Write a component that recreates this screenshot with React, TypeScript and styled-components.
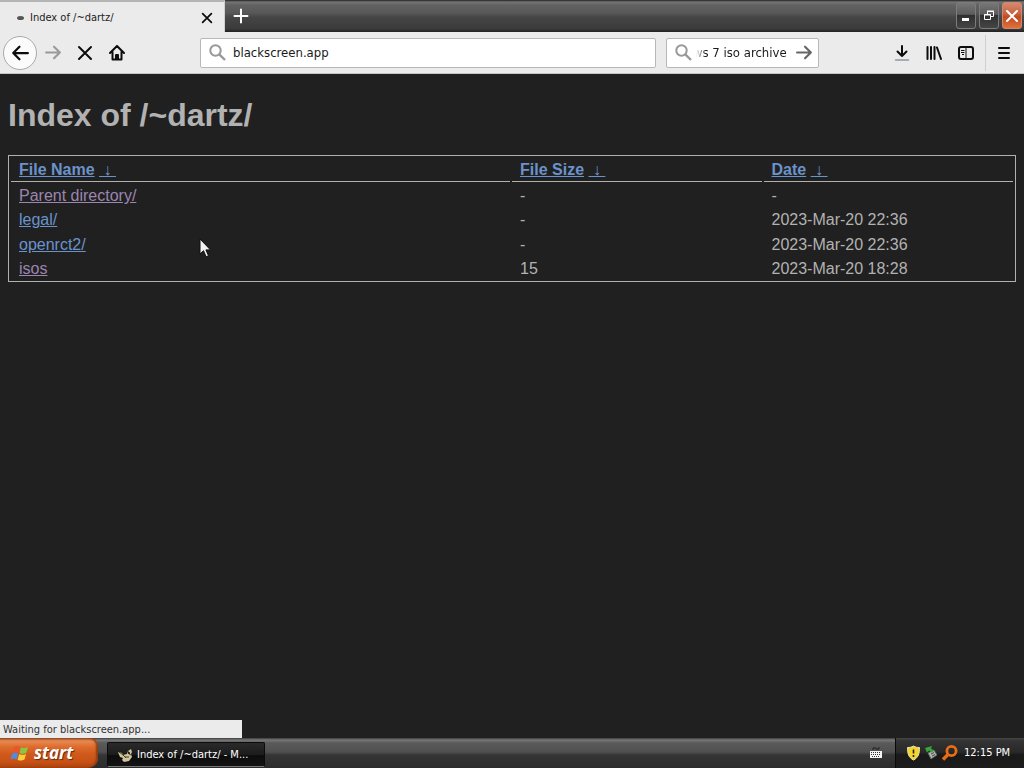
import React from "react";
import styled, { createGlobalStyle } from "styled-components";

const ui = `"DejaVu Sans Condensed", Tahoma, "DejaVu Sans", sans-serif`;

const Global = createGlobalStyle`
  * { box-sizing: border-box; }
  body { margin: 0; background: #202020; }
  button { border: 0; padding: 0; margin: 0; background: none; cursor: default; }
`;

const Desktop = styled.div`
  display: flex;
  flex-direction: column;
  min-height: 100vh;
  font-family: ${ui};
`;

const TitleBar = styled.header`
  display: flex;
  height: 32px;
  background: linear-gradient(#222 0, #757575 2px, #626262 5px, #585858 13px, #464646 17px, #3a3a3a 29px, #262626 31px);
`;

const Tab = styled.div`
  display: flex;
  align-items: center;
  width: 225px;
  padding: 1px 9px 0 17px;
  border-top: 2px solid #b4b4b4;
  border-right: 1px solid #d0d0d0;
  background: #ebebeb;
`;

const Throbber = styled.span`
  width: 7px;
  height: 4px;
  margin-right: 6px;
  border-radius: 50%;
  background: #555;
`;

const TabTitle = styled.span`
  flex: 1;
  font-size: 11px;
  line-height: 16px;
  color: #222;
`;

const IconButton = styled.button<{ $w: number; $h?: number }>`
  display: flex;
  flex: none;
  align-items: center;
  justify-content: center;
  width: ${(p) => p.$w}px;
  height: ${(p) => p.$h ?? 32}px;
`;

const WindowButtons = styled.div`
  display: flex;
  gap: 3px;
  margin-left: auto;
  padding: 2px 2px 0 0;
`;

const WindowButton = styled.button<{ $close?: boolean }>`
  display: flex;
  align-items: center;
  justify-content: center;
  width: 20px;
  height: 27px;
  border: 1px solid ${(p) => (p.$close ? "#c98a70" : "#7c7c7c")};
  border-radius: 3px;
  background: ${(p) =>
    p.$close
      ? "linear-gradient(#d58a70, #c8613d 45%, #c04a20 55%, #e0713c)"
      : "linear-gradient(#777, #5c5c5c 45%, #303030 50%, #454545)"};
`;

const ToolBar = styled.nav`
  display: flex;
  align-items: center;
  height: 42px;
  padding: 0 2px 0 3px;
  border-bottom: 1px solid #c4c4c4;
  background: #ebebeb;
`;

const BackButton = styled(IconButton)`
  border: 1px solid #a9a9a9;
  border-radius: 50%;
  background: #fbfbfb;
`;

const Field = styled.label<{ $search?: boolean }>`
  display: flex;
  align-items: center;
  height: 30px;
  min-width: 0;
  flex: ${(p) => (p.$search ? "0 0 153px" : "1 1 0")};
  margin-left: ${(p) => (p.$search ? 10 : 67)}px;
  padding: 0 5px 0 8px;
  border: 1px solid #b8b8b8;
  border-radius: 2px;
  background: #fff;
`;

const FieldInput = styled.input<{ $clipped?: boolean }>`
  flex: 1;
  min-width: 0;
  height: 20px;
  margin-left: ${(p) => (p.$clipped ? 4 : 7)}px;
  padding: 0;
  border: 0;
  outline: 0;
  background: none;
  font: 13px/20px ${ui};
  color: #1a1a1a;
  text-indent: ${(p) => (p.$clipped ? -3 : 0)}px;
  mask-image: ${(p) => (p.$clipped ? "linear-gradient(90deg, transparent, #000 10px)" : "none")};
`;

const Tools = styled.div`
  display: flex;
  align-items: center;
  margin-left: 67px;
`;

const MenuSlot = styled.div`
  display: flex;
  align-items: center;
  height: 36px;
  margin-left: 3px;
  border-left: 1px solid #cfcfcf;
`;

const Page = styled.main`
  position: relative;
  flex: 1;
  padding: 0 8px;
  font: 16px/18px "Liberation Sans", Arial, sans-serif;
  color: #b2b2b2;
  background: #202020;
`;

const Heading = styled.h1`
  margin: 0;
  padding: 23px 0 21px;
  font-size: 32px;
  line-height: 37px;
`;

const FileTable = styled.table`
  width: 100%;
  height: 127px;
  table-layout: fixed;
  border: 1px solid #b0b0ac;
  border-spacing: 2px;
`;

const HeadCell = styled.th<{ $width: string }>`
  width: ${(p) => p.$width};
  height: 24px;
  padding: 0 8px;
  border-bottom: 1px solid #b0b0ac;
  text-align: left;
`;

const Cell = styled.td`
  height: 22px;
  padding: 2px 8px 0;
`;

const Link = styled.a<{ $visited?: boolean }>`
  color: ${(p) => (p.$visited ? "#9b86b0" : "#6b93cb")};
`;

const Status = styled.div`
  position: absolute;
  left: 0;
  bottom: 0;
  width: 242px;
  height: 18px;
  padding: 1px 3px 0;
  background: #ebebeb;
  font: 11px/18px ${ui};
  color: #333;
`;

const Cursor = styled.svg`
  position: absolute;
  left: 199px;
  top: 164px;
`;

const TaskBar = styled.footer`
  display: flex;
  align-items: stretch;
  height: 30px;
  background: linear-gradient(#3c3c3c, #777 2px, #5a5a5a 5px, #505050 14px, #353535 17px, #2c2c2c);
`;

const StartButton = styled.button`
  display: flex;
  align-items: center;
  gap: 4px;
  width: 98px;
  padding-left: 10px;
  border-radius: 0 8px 10px 0;
  background: linear-gradient(#8f4a28, #e88a52 3px, #dd6b2c 9px, #d05a1c 16px, #c85216 24px, #a8420e);
  box-shadow: inset -2px 0 2px #8c3c10;
  color: #fff;
  font: italic bold 17px/24px "Open Sans", "Noto Sans", sans-serif;
  text-shadow: 1px 1px 1px #5c2a0c;
`;

const TaskButton = styled.button`
  display: flex;
  align-items: center;
  gap: 4px;
  width: 158px;
  height: 25px;
  margin: 4px 0 0 9px;
  padding-left: 10px;
  border: 1px solid #0c0c0c;
  border-bottom-color: #777;
  border-radius: 2px;
  background: linear-gradient(#2a2a2a, #1c1c1c 50%, #0c0c0c 55%, #141414);
  color: #fff;
  font: 11px/16px ${ui};
`;

const Keyboard = styled.div`
  display: flex;
  align-items: center;
  margin-left: auto;
  padding: 0 12px;
`;

const Tray = styled.div`
  display: flex;
  align-items: center;
  gap: 2px;
  width: 129px;
  padding-left: 10px;
  border-left: 1px solid #090909;
  background: linear-gradient(#444, #333 3px, #292929 14px, #191919 17px, #1c1c1c);
`;

const Clock = styled.time`
  margin-left: 4px;
  font-size: 11px;
  line-height: 16px;
  color: #fff;
  white-space: nowrap;
`;

const Line = ({ d, size = 16, color = "#0c0c0d", width = 2 }: { d: string; size?: number; color?: string; width?: number }) => (
  <svg width={size} height={size} viewBox="0 0 16 16" fill="none" stroke={color} strokeWidth={width} strokeLinecap="round" strokeLinejoin="round">
    <path d={d} />
  </svg>
);

const Magnifier = () => (
  <svg width="17" height="17" viewBox="0 0 17 17" fill="none" stroke="#999" strokeWidth="2">
    <circle cx="6.5" cy="6.5" r="5.2" />
    <path d="M10.3 10.3 16 16" strokeWidth="2.4" />
  </svg>
);

const columns = [
  { label: "File Name", width: "50%" },
  { label: "File Size", width: "25%" },
  { label: "Date", width: "25%" },
];

const files = [
  { name: "Parent directory/", size: "-", date: "-", visited: true },
  { name: "legal/", size: "-", date: "2023-Mar-20 22:36" },
  { name: "openrct2/", size: "-", date: "2023-Mar-20 22:36" },
  { name: "isos", size: "15", date: "2023-Mar-20 18:28", visited: true },
];

export default function App() {
  return (
    <Desktop>
      <Global />
      <TitleBar>
        <Tab>
          <Throbber />
          <TabTitle>Index of /~dartz/</TabTitle>
          <IconButton $w={16} $h={20} aria-label="Close tab">
            <Line size={14} width={2} d="M3 3l10 10M13 3L3 13" />
          </IconButton>
        </Tab>
        <IconButton $w={32} aria-label="New tab">
          <Line color="#fff" d="M8 1.5v13M1.5 8h13" />
        </IconButton>
        <WindowButtons>
          <WindowButton aria-label="Minimize">
            <svg width="16" height="16"><path d="M4 10h7v3H4z" fill="#fff" /></svg>
          </WindowButton>
          <WindowButton aria-label="Restore">
            <svg width="16" height="16" fill="none" stroke="#fff">
              <path d="M6.5 6V3.5h6v5H10M6 3h7" />
              <path d="M3.500 6.500h6v5h-6zM3 7h7" />
            </svg>
          </WindowButton>
          <WindowButton $close aria-label="Close">
            <Line color="#fff" d="M3 3l10 10M13 3L3 13" />
          </WindowButton>
        </WindowButtons>
      </TitleBar>

      <ToolBar>
        <BackButton $w={34} $h={34} aria-label="Back">
          <Line size={18} d="M15 8H2M7.5 2.5L2 8l5.5 5.5" />
        </BackButton>
        <IconButton $w={32} aria-label="Forward">
          <Line size={17} color="#9a9a9a" d="M1 8h13M8.5 2.5L14 8l-5.5 5.5" />
        </IconButton>
        <IconButton $w={32} aria-label="Stop">
          <Line d="M2 2l12 12M14 2L2 14" />
        </IconButton>
        <IconButton $w={32} aria-label="Home">
          <svg width="16" height="16" viewBox="0 0 16 16" fill="none" stroke="#0c0c0d" strokeWidth="2" strokeLinecap="round" strokeLinejoin="round">
            <path d="M1 8l7-7 7 7M3.5 7v7.5h9V7" />
            <path d="M7 14v-4h2v4" />
          </svg>
        </IconButton>
        <Field>
          <Magnifier />
          <FieldInput aria-label="Address" defaultValue="blackscreen.app" />
        </Field>
        <Field $search>
          <Magnifier />
          <FieldInput $clipped aria-label="Search" defaultValue="ws 7 iso archive" />
          <IconButton $w={18} $h={20} aria-label="Search the web">
            <Line size={17} color="#666" d="M1 8h13M8.5 2.5L14 8l-5.5 5.5" />
          </IconButton>
        </Field>
        <Tools>
          <IconButton $w={32} aria-label="Downloads">
            <svg width="16" height="18" viewBox="0 0 16 18" fill="none" stroke="#0c0c0d" strokeWidth="2" strokeLinecap="round" strokeLinejoin="round">
              <path d="M8 2v10M3.5 7.5L8 12l4.5-4.5" />
              <path d="M1.500 16h13" stroke="#8b9aa5" strokeWidth="1.500" />
            </svg>
          </IconButton>
          <IconButton $w={32} aria-label="Library">
            <Line d="M1.5 2v12M5 2v12M8.5 2v12M11 2.5l4 11.5" />
          </IconButton>
          <IconButton $w={32} aria-label="Sidebar">
            <svg width="16" height="16" viewBox="0 0 16 16" fill="none" stroke="#0c0c0d">
              <rect x="1" y="2" width="14" height="12" rx="2" strokeWidth="2" />
              <path d="M8 2v12M3 5.5h3.5M3 7.5h3.5M4 9.5h2" />
            </svg>
          </IconButton>
          <MenuSlot>
            <IconButton $w={36} aria-label="Menu">
              <Line d="M3 3h10M3 8h10M3 13h10" />
            </IconButton>
          </MenuSlot>
        </Tools>
      </ToolBar>

      <Page>
        <Heading>Index of /~dartz/</Heading>
        <FileTable>
          <thead>
            <tr>
              {columns.map((c) => (
                <HeadCell key={c.label} $width={c.width} scope="col">
                  <Link href="#">{c.label}</Link> <Link href="#">&nbsp;↓&nbsp;</Link>
                </HeadCell>
              ))}
            </tr>
          </thead>
          <tbody>
            {files.map((f) => (
              <tr key={f.name}>
                <Cell><Link href="#" $visited={f.visited}>{f.name}</Link></Cell>
                <Cell>{f.size}</Cell>
                <Cell>{f.date}</Cell>
              </tr>
            ))}
          </tbody>
        </FileTable>
        <Cursor width="12" height="20" viewBox="0 0 12 20">
          <path d="M1 1v15l3.500-3.300 2.600 6 2.400-1-2.600-5.800h4.600z" fill="#f2f2f2" stroke="#111" />
        </Cursor>
        <Status role="status">Waiting for blackscreen.app...</Status>
      </Page>

      <TaskBar>
        <StartButton>
          <svg width="20" height="20" viewBox="0 0 20 20">
            <path d="M4 4c2-1.5 4-1.3 6-.2L8.5 9.5C6.5 8.4 4.5 8.4 2.5 9.6z" fill="#e8562a" />
            <path d="M11 4.2c2 1.2 4.5 1.2 7-.2l-1.6 5.8c-2.3 1.3-4.7 1.2-6.9.1z" fill="#8cc63e" />
            <path d="M2.2 10.7c2-1.3 4-1.2 6-.1l-1.6 5.7c-2-1.1-4-1.1-6 .1z" fill="#4d8be8" />
            <path d="M9.2 11c2.2 1.1 4.6 1.2 6.900-.1l-1.6 5.700c-2.300 1.300-4.700 1.200-6.900.1z" fill="#f8cf38" />
          </svg>
          start
        </StartButton>
        <TaskButton>
          <svg width="15" height="14" viewBox="0 0 15 14">
            <path d="M0 4l4 1 1 2 4-1 1-3 3-2 1 3-1 2 1 3-3 4-5 1-2-2 1-2-3-1z" fill="#cfc3a0" />
            <path d="M1 4l4 3 3 3M10 3l1 3 2 1M7 9h4" stroke="#4a3b22" fill="none" />
            <circle cx="11" cy="5" r="1" fill="#111" />
          </svg>
          Index of /~dartz/ - M...
        </TaskButton>
        <Keyboard>
          <svg width="14" height="12" viewBox="0 0 14 12">
            <path d="M4 3V1h3v1h3V0" fill="none" stroke="#222" />
            <path d="M1 4h12v7H1z" fill="#f4f4f4" />
            <path d="M2 5.5h10M2 7.5h10M3 9.5h8" stroke="#333" strokeDasharray="1 1" />
          </svg>
        </Keyboard>
        <Tray>
          <svg width="15" height="16" viewBox="0 0 15 16">
            <path d="M7.5 1c2 1.3 3.8 1.5 6 1.5 0 6-1 10-6 12.5-5-2.5-6-6.5-6-12.5 2.2 0 4-.2 6-1.5z" fill="#f5d52c" stroke="#e9e4c0" />
            <path d="M7.5 4.5v4M7.5 10v2" stroke="#222" strokeWidth="1.6" />
          </svg>
          <svg width="16" height="16" viewBox="0 0 16 16">
            <path d="M5 8l6-3 3 5-6 4z" fill="#aeb8b0" stroke="#59635c" />
            <path d="M8 9l3-1.5M9 11l3-1.5" stroke="#444" />
            <path d="M2 3l7-2-1 2.5 3 2-2 2-3-2-2 2z" fill="#37a63c" />
          </svg>
          <svg width="17" height="16" viewBox="0 0 17 16" fill="none" stroke="#ea6d14">
            <circle cx="10.5" cy="6" r="4.6" strokeWidth="2.8" />
            <path d="M7 9.5L2 14.5" strokeWidth="3.4" />
          </svg>
          <Clock>12:15 PM</Clock>
        </Tray>
      </TaskBar>
    </Desktop>
  );
}
